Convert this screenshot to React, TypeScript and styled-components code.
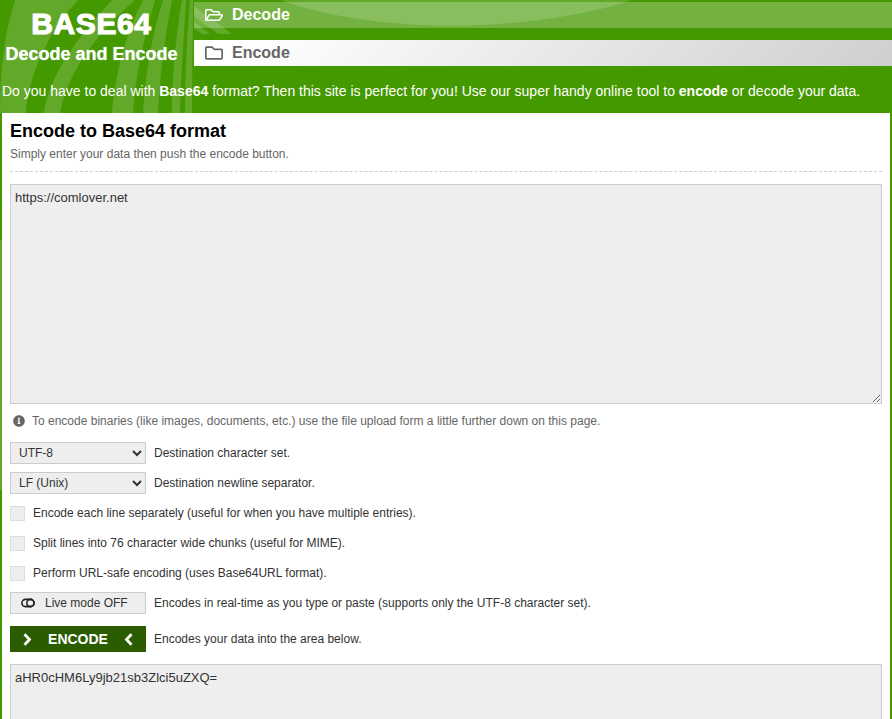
import React from "react";
import styled, { createGlobalStyle } from "styled-components";
import { FaRegFolderOpen, FaRegFolder, FaInfoCircle } from "react-icons/fa";

const Global = createGlobalStyle`
  html, body { margin: 0; padding: 0; height: 100%; overflow: hidden; background: #449900; }
  body { font-family: "Liberation Sans", Arial, sans-serif; font-size: 12px; color: #333; }
  * { box-sizing: border-box; }
`;

const Page = styled.div`
  position: relative;
  height: 100vh;
  overflow: hidden;
  background: #449900;
`;
const Backdrop = styled.svg`
  position: absolute;
  left: 0;
  top: 0;
  pointer-events: none;
`;
const Header = styled.header`
  position: relative;
  display: grid;
  grid-template-columns: 194px 1fr;
  height: 113px;
`;
const Brand = styled.div`
  display: flex;
  flex-direction: column;
  align-items: center;
  padding: 6px 11px 0 0;
  color: #fff;
  text-shadow: 0 0 1px rgba(255, 255, 255, 0.8);
`;
const Logo = styled.div`
  font-size: 30px;
  line-height: 36px;
  font-weight: 700;
  letter-spacing: 0.6px;
  -webkit-text-stroke: 1px #fff;
`;
const Tagline = styled.div`
  font-size: 18px;
  line-height: 22px;
  margin-top: 1px;
  font-weight: 700;
`;
const Nav = styled.nav`
  display: flex;
  flex-direction: column;
  gap: 12px;
  padding-top: 2px;
`;
const NavItem = styled.a<{ $active?: boolean }>`
  display: flex;
  align-items: center;
  gap: 8px;
  height: 26px;
  padding-left: 11px;
  font-size: 16px;
  font-weight: 700;
  color: ${(p) => (p.$active ? "#666" : "#fff")};
  background: ${(p) =>
    p.$active
      ? "linear-gradient(135deg, #fff 0%, #fff 8%, #cfcfcf 100%)"
      : "rgba(255,255,255,0.25)"};
  svg { font-size: 18px; flex: none; }
  span { margin-left: 1px; }
`;
const Intro = styled.p`
  position: absolute;
  left: 2px;
  top: 83px;
  margin: 0;
  font-size: 14px;
  line-height: 16px;
  color: #fff;
  white-space: nowrap;
  b { font-weight: 700; }
`;
const Card = styled.main`
  position: relative;
  margin: 0 2px;
  padding: 8px 8px 0;
  height: 606px;
  background: #fff;
`;
const Title = styled.h1`
  margin: 0;
  font-size: 18px;
  line-height: 20px;
  font-weight: 700;
  color: #000;
`;
const Sub = styled.p`
  margin: 5px 0 0;
  font-size: 12px;
  line-height: 16px;
  color: #666;
`;
const Divider = styled.hr`
  margin: 9px 0 12px;
  border: 0;
  border-top: 1px dashed #ccc;
`;
const Area = styled.textarea<{ $h: number }>`
  display: block;
  width: 100%;
  height: ${(p) => p.$h}px;
  padding: 4px;
  border: 1px solid #ccc;
  border-radius: 0;
  outline: 0;
  background: #eee;
  color: #333;
  font-family: "Liberation Sans", Arial, sans-serif;
  font-size: 13px;
  line-height: 18px;
`;
const Hint = styled.div`
  display: flex;
  align-items: center;
  gap: 7px;
  height: 16px;
  margin: 9px 0 13px 3px;
  color: #666;
  svg { font-size: 12px; color: #666; }
`;
const Rows = styled.div`
  display: flex;
  flex-direction: column;
  gap: 8px;
`;
const Row = styled.div`
  display: flex;
  align-items: center;
  gap: 8px;
  height: 22px;
`;
const Select = styled.select`
  width: 136px;
  height: 22px;
  padding: 0 4px;
  border: 1px solid #ccc;
  border-radius: 0;
  background: #eee;
  color: #333;
  font-family: "Liberation Sans", Arial, sans-serif;
  font-size: 12px;
  outline: 0;
`;
const Check = styled.span`
  width: 15px;
  height: 15px;
  border: 1px solid #ddd;
  background: #eee;
  flex: none;
`;
const LiveButton = styled.button`
  display: flex;
  align-items: center;
  gap: 10px;
  width: 136px;
  height: 22px;
  padding: 0 0 0 10px;
  border: 1px solid #ccc;
  background: #eee;
  color: #333;
  font-family: "Liberation Sans", Arial, sans-serif;
  font-size: 12px;
`;
const EncodeRow = styled(Row)`
  height: 26px;
  margin-top: 4px;
`;
const EncodeButton = styled.button`
  display: flex;
  align-items: center;
  justify-content: space-between;
  width: 136px;
  height: 26px;
  padding: 0 13px;
  border: 0;
  background: #2b5c00;
  color: #fff;
  font-family: "Liberation Sans", Arial, sans-serif;
  font-size: 14px;
  font-weight: 700;
`;
const Output = styled(Area)`
  margin-top: 12px;
`;

const Chevron = ({ left }: { left?: boolean }) => (
  <svg width="9" height="13" viewBox="0 0 9 13">
    <path d={left ? "M7.5 1.2 2.5 6.5 7.5 11.8" : "M1.5 1.2 6.5 6.5 1.5 11.8"} fill="none" stroke="#fff" strokeWidth="2.8" />
  </svg>
);

const Toggle = () => (
  <svg width="14" height="10" viewBox="0 0 14 10">
    <rect x="0.9" y="1.4" width="12.2" height="7.2" rx="3.6" fill="none" stroke="#222" strokeWidth="1.6" />
    <circle cx="9.4" cy="5" r="3.6" fill="none" stroke="#222" strokeWidth="1.6" />
  </svg>
);

export default function App() {
  return (
    <Page>
      <Global />
      <Backdrop width="892" height="719" viewBox="0 0 892 719">
        <g fill="#fff" fillOpacity="0.16">
          <path d="M15 0C5 30 0 70 0 113L26 113C28 80 45 35 78 0Z" />
          <path d="M112 0C85 30 50 70 44 113H60C68 70 100 30 135 0Z" />
          <path d="M143 0C125 35 115 75 112 113H133C135 75 145 35 155 0Z" />
          <path d="M163 0C152 35 145 75 143 113H158C160 75 165 35 172 0Z" />
          <path d="M182 0C176 35 172 75 172 113H180C181 75 184 35 186 0Z" />
          <path d="M190 0C187 35 185 75 185 113H192C192 75 193 35 193 0Z" />
          <path d="M194 6 232 34H218L194 16Z" />
          <path d="M194 22 210 34H202L194 28Z" />
          <path d="M280 0C320 14 370 24 446 26C520 26 590 14 632 0Z" />
          <path d="M0 240H2V490H0Z" />
        </g>
      </Backdrop>
      <Header>
        <Brand>
          <Logo>BASE64</Logo>
          <Tagline>Decode and Encode</Tagline>
        </Brand>
        <Nav>
          <NavItem>
            <FaRegFolderOpen />
            <span>Decode</span>
          </NavItem>
          <NavItem $active>
            <FaRegFolder />
            <span>Encode</span>
          </NavItem>
        </Nav>
        <Intro>
          Do you have to deal with <b>Base64</b> format? Then this site is perfect for you! Use our super handy online
          tool to <b>encode</b> or decode your data.
        </Intro>
      </Header>
      <Card>
        <Title>Encode to Base64 format</Title>
        <Sub>Simply enter your data then push the encode button.</Sub>
        <Divider />
        <Area $h={220} defaultValue="https://comlover.net" />
        <Hint>
          <FaInfoCircle />
          To encode binaries (like images, documents, etc.) use the file upload form a little further down on this page.
        </Hint>
        <Rows>
          <Row>
            <Select defaultValue="UTF-8"><option>UTF-8</option></Select>
            Destination character set.
          </Row>
          <Row>
            <Select defaultValue="LF (Unix)"><option>LF (Unix)</option></Select>
            Destination newline separator.
          </Row>
          <Row><Check />Encode each line separately (useful for when you have multiple entries).</Row>
          <Row><Check />Split lines into 76 character wide chunks (useful for MIME).</Row>
          <Row><Check />Perform URL-safe encoding (uses Base64URL format).</Row>
          <Row>
            <LiveButton><Toggle />Live mode OFF</LiveButton>
            Encodes in real-time as you type or paste (supports only the UTF-8 character set).
          </Row>
          <EncodeRow>
            <EncodeButton><Chevron />ENCODE<Chevron left /></EncodeButton>
            Encodes your data into the area below.
          </EncodeRow>
        </Rows>
        <Output $h={200} defaultValue="aHR0cHM6Ly9jb21sb3Zlci5uZXQ=" />
      </Card>
    </Page>
  );
}
